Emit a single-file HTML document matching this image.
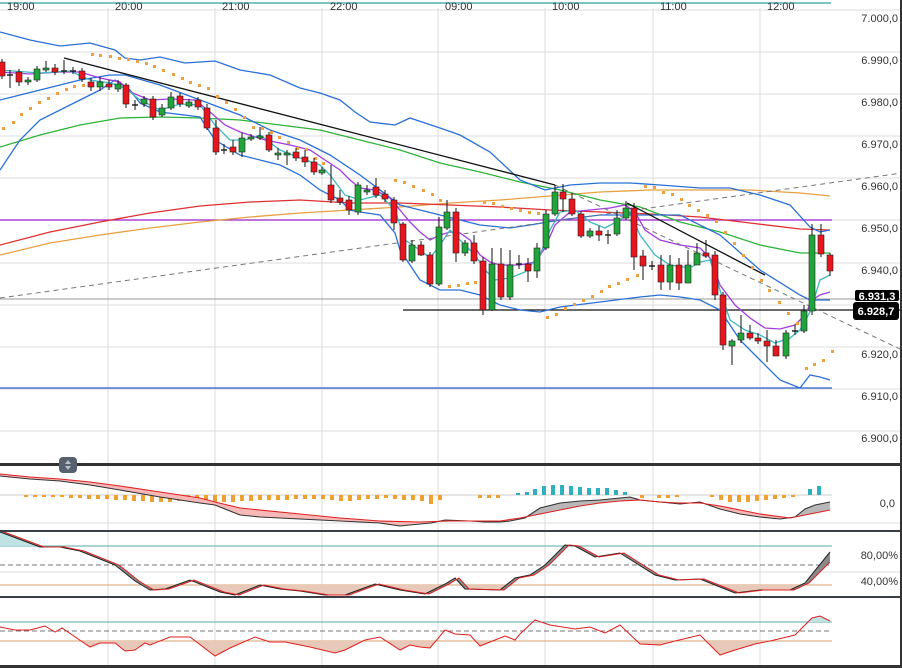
<!DOCTYPE html>
<html><head><meta charset="utf-8"><style>
html,body{margin:0;padding:0;background:#fff;}
svg{display:block;font-family:"Liberation Sans",sans-serif;}
</style></head><body>
<svg width="902" height="668" viewBox="0 0 902 668" xmlns="http://www.w3.org/2000/svg">
<rect width="902" height="668" fill="#fff"/>
<!-- grid -->
<g stroke="#dcdcdc" stroke-width="1">
<line x1="108" y1="8" x2="108" y2="666"/><line x1="215" y1="8" x2="215" y2="666"/><line x1="322" y1="8" x2="322" y2="666"/><line x1="438" y1="8" x2="438" y2="666"/><line x1="545" y1="8" x2="545" y2="666"/><line x1="653" y1="8" x2="653" y2="666"/><line x1="760" y1="8" x2="760" y2="666"/>
<line x1="0" y1="10" x2="900" y2="10"/><line x1="0" y1="52" x2="900" y2="52"/><line x1="0" y1="94" x2="900" y2="94"/><line x1="0" y1="136" x2="900" y2="136"/><line x1="0" y1="178" x2="900" y2="178"/><line x1="0" y1="220" x2="900" y2="220"/><line x1="0" y1="263" x2="900" y2="263"/><line x1="0" y1="305" x2="900" y2="305"/><line x1="0" y1="347" x2="900" y2="347"/><line x1="0" y1="389" x2="900" y2="389"/><line x1="0" y1="431" x2="900" y2="431"/>
<line x1="0" y1="523" x2="900" y2="523"/><line x1="0" y1="572" x2="900" y2="572"/>
</g>
<line x1="0" y1="3" x2="831" y2="3" stroke="#4fb3b3" stroke-width="1.5"/>
<g font-size="11" fill="#333">
<text x="7" y="10">19:00</text><text x="115" y="10">20:00</text><text x="222" y="10">21:00</text><text x="330" y="10">22:00</text><text x="445" y="10">09:00</text><text x="552" y="10">10:00</text><text x="660" y="10">11:00</text><text x="767" y="10">12:00</text>
<g text-anchor="end"><text x="898" y="22">7.000,0</text><text x="898" y="64">6.990,0</text><text x="898" y="106">6.980,0</text><text x="898" y="148">6.970,0</text><text x="898" y="190">6.960,0</text><text x="898" y="232">6.950,0</text><text x="898" y="274">6.940,0</text><text x="898" y="358">6.920,0</text><text x="898" y="400">6.910,0</text><text x="898" y="442">6.900,0</text>
<text x="895" y="507">0,0</text><text x="898" y="559">80,00%</text><text x="898" y="585">40,00%</text></g>
</g>
<!-- horizontal levels -->
<line x1="0" y1="220" x2="832" y2="220" stroke="#9b1fc9" stroke-width="1.2"/>
<line x1="0" y1="388" x2="832" y2="388" stroke="#2a62c9" stroke-width="1.2"/>
<line x1="0" y1="299" x2="900" y2="299" stroke="#999" stroke-width="1"/>
<line x1="403" y1="310" x2="900" y2="310" stroke="#111" stroke-width="1.2"/>
<!-- MAs -->
<g fill="none" stroke-width="1.3">
<polyline stroke="#e8a040" points="0,255 50,243 100,235 150,228 200,222 250,217 300,213 350,210 400,207 450,203 500,200 550,196 600,192 650,190 700,190 750,190 800,193 830,196"/>
<polyline stroke="#e03030" points="0,245 50,232 100,222 150,213 200,206 250,202 300,200 350,203 400,203 450,205 500,207 550,210 600,212 650,214 700,217 750,223 800,229 830,230"/>
<polyline stroke="#2eb43a" points="0,147 40,135 80,125 120,118 160,117 200,118 240,120 280,125 320,130 360,140 400,150 440,163 480,172 520,182 560,190 600,200 640,207 680,222 720,232 760,245 800,253 830,253"/>
<polyline stroke="#2a70d8" points="0,32 30,40 60,46 90,43 115,50 125,58 140,60 160,57 185,63 215,61 240,70 270,75 300,88 320,93 340,100 355,112 370,122 395,125 410,118 440,128 460,135 490,152 520,180 545,190 570,185 600,183 630,183 660,185 700,188 730,188 760,195 790,205 810,227 820,232 830,230"/>
<polyline stroke="#2a70d8" points="0,100 40,90 80,80 110,75 125,75 160,85 200,100 240,115 270,130 300,140 330,155 360,175 400,205 440,215 480,225 510,228 530,225 560,220 600,215 640,215 680,215 720,235 760,270 800,295 810,300 830,300"/>
<polyline stroke="#2a70d8" points="0,170 20,140 40,120 70,105 100,90 115,80 130,90 140,103 160,112 200,117 215,140 240,155 260,160 280,165 300,175 320,190 340,200 350,210 360,212 380,215 395,233 400,250 420,280 440,290 460,290 480,295 500,305 520,310 540,312 560,307 600,302 640,297 660,295 680,297 700,300 720,310 740,340 760,360 780,380 800,388 810,375 820,377 830,380"/>
<polyline stroke="#a33be0" points="0,72 30,74 60,72 80,72 100,78 120,82 130,92 150,100 170,99 195,100 210,112 225,125 240,132 265,140 290,145 310,150 325,160 340,170 350,180 360,188 375,190 390,198 400,210 410,222 420,232 430,240 440,235 450,232 460,233 470,240 480,255 490,262 500,265 520,265 535,262 545,248 555,225 570,212 590,210 610,208 625,205 635,212 645,230 660,240 680,245 700,248 710,258 720,285 735,305 750,318 765,328 780,329 795,325 805,315 812,300 820,295 830,292"/>
<polyline stroke="#3fb8c0" points="0,70 40,73 70,71 90,80 110,83 125,88 140,100 160,110 180,104 200,105 215,125 230,140 245,140 260,135 280,150 300,158 320,165 330,175 345,195 360,200 380,195 395,210 405,240 420,250 430,258 440,245 450,230 460,240 475,255 485,270 495,280 510,278 525,272 540,255 550,230 560,212 575,210 590,222 605,228 620,220 630,212 640,235 655,255 670,265 690,268 700,262 710,260 720,290 730,320 745,330 760,335 775,343 790,338 800,330 810,312 820,280 830,275"/>
</g>
<!-- trend lines -->
<g fill="none">
<line x1="64" y1="58" x2="555" y2="185" stroke="#111" stroke-width="1.3"/>
<line x1="627" y1="203" x2="765" y2="275" stroke="#111" stroke-width="1.3"/>
<line x1="0" y1="298" x2="902" y2="173" stroke="#777" stroke-dasharray="5,4"/>
<line x1="555" y1="185" x2="902" y2="350" stroke="#777" stroke-dasharray="5,4"/>
</g>
<!-- SAR -->
<g fill="#f0a040">
<rect x="2" y="127" width="3" height="3"/><rect x="12" y="121" width="3" height="3"/><rect x="20" y="113" width="3" height="3"/><rect x="29" y="107" width="3" height="3"/><rect x="38" y="101" width="3" height="3"/><rect x="47" y="97" width="3" height="3"/><rect x="56" y="92" width="3" height="3"/><rect x="65" y="88" width="3" height="3"/><rect x="73" y="85" width="3" height="3"/><rect x="82" y="84" width="3" height="3"/>
<rect x="91" y="53" width="3" height="3"/><rect x="99" y="54" width="3" height="3"/><rect x="109" y="55" width="3" height="3"/><rect x="118" y="57" width="3" height="3"/><rect x="127" y="58" width="3" height="3"/><rect x="136" y="60" width="3" height="3"/><rect x="145" y="62" width="3" height="3"/><rect x="153" y="65" width="3" height="3"/><rect x="162" y="69" width="3" height="3"/><rect x="172" y="73" width="3" height="3"/><rect x="181" y="77" width="3" height="3"/><rect x="189" y="81" width="3" height="3"/><rect x="198" y="84" width="3" height="3"/><rect x="207" y="87" width="3" height="3"/><rect x="216" y="95" width="3" height="3"/><rect x="225" y="101" width="3" height="3"/><rect x="234" y="108" width="3" height="3"/><rect x="243" y="116" width="3" height="3"/><rect x="252" y="126" width="3" height="3"/><rect x="261" y="127" width="3" height="3"/><rect x="270" y="131" width="3" height="3"/><rect x="278" y="136" width="3" height="3"/><rect x="287" y="141" width="3" height="3"/><rect x="296" y="147" width="3" height="3"/><rect x="305" y="148" width="3" height="3"/><rect x="314" y="157" width="3" height="3"/><rect x="322" y="162" width="3" height="3"/>
<rect x="394" y="179" width="3" height="3"/><rect x="403" y="181" width="3" height="3"/><rect x="412" y="185" width="3" height="3"/><rect x="422" y="189" width="3" height="3"/><rect x="431" y="193" width="3" height="3"/><rect x="439" y="199" width="3" height="3"/>
<rect x="448" y="285" width="3" height="3"/><rect x="457" y="284" width="3" height="3"/><rect x="466" y="282" width="3" height="3"/><rect x="474" y="281" width="3" height="3"/>
<rect x="483" y="201" width="3" height="3"/><rect x="492" y="202" width="3" height="3"/><rect x="501" y="205" width="3" height="3"/><rect x="510" y="207" width="3" height="3"/><rect x="519" y="209" width="3" height="3"/><rect x="528" y="211" width="3" height="3"/><rect x="537" y="212" width="3" height="3"/>
<rect x="546" y="316" width="3" height="3"/><rect x="555" y="313" width="3" height="3"/><rect x="564" y="307" width="3" height="3"/><rect x="573" y="303" width="3" height="3"/><rect x="582" y="299" width="3" height="3"/><rect x="591" y="295" width="3" height="3"/><rect x="600" y="290" width="3" height="3"/><rect x="608" y="285" width="3" height="3"/><rect x="617" y="282" width="3" height="3"/><rect x="626" y="278" width="3" height="3"/><rect x="636" y="274" width="3" height="3"/>
<rect x="644" y="185" width="3" height="3"/><rect x="653" y="186" width="3" height="3"/><rect x="662" y="191" width="3" height="3"/><rect x="671" y="193" width="3" height="3"/><rect x="680" y="198" width="3" height="3"/><rect x="688" y="204" width="3" height="3"/><rect x="697" y="209" width="3" height="3"/><rect x="706" y="214" width="3" height="3"/><rect x="715" y="220" width="3" height="3"/><rect x="724" y="231" width="3" height="3"/><rect x="733" y="242" width="3" height="3"/><rect x="742" y="254" width="3" height="3"/><rect x="751" y="266" width="3" height="3"/><rect x="760" y="279" width="3" height="3"/><rect x="768" y="289" width="3" height="3"/><rect x="778" y="301" width="3" height="3"/><rect x="787" y="312" width="3" height="3"/><rect x="796" y="322" width="3" height="3"/>
<rect x="805" y="367" width="3" height="3"/><rect x="813" y="363" width="3" height="3"/><rect x="822" y="359" width="3" height="3"/><rect x="831" y="350" width="3" height="3"/>
</g>
<!-- candles -->
<g stroke="#111" stroke-width="1">
<path d="M2 59V79M10 70V88M19 69V86M28 77V85M37 66V82M46 61V72M55 64V75M64 60V74M73 67V74M82 68V82M91 78V91M100 77V91M109 80V90M118 80V92M126 83V108M135 100V110M144 96V107M153 96V120M162 104V117M171 92V110M180 93V107M189 99V108M198 97V110M207 104V130M216 120V155M224 144V154M233 140V155M242 133V157M251 134V141M260 127V140M269 132V152M278 148V160M287 150V165M296 148V161M305 150V167M314 158V175M322 167V175M331 165V203M340 190V205M349 196V215M358 182V215M367 185V195M376 178V198M385 190V202M394 197V230M403 222V262M412 240V263M421 241V256M430 252V287M439 217V286M447 200V230M456 208V262M465 240V256M474 235V264M483 257V315M492 248V311M501 248V300M510 250V300M519 255V269M528 258V282M537 243V278M546 210V250M555 185V216M563 184V212M572 193V216M581 211V238M590 228V238M599 226V241M608 230V244M617 210V236M626 201V220M634 203V270M643 250V280M652 261V270M661 255V290M670 255V290M679 258V290M688 250V283M697 243V265M706 240V258M715 251V300M723 292V350M732 339V365M741 315V343M750 325V340M758 333V344M767 330V362M776 340V355M786 330V359M795 325V335M804 305V333M812 224V315M821 224V257M830 253V276"/>
</g>
<g fill="#e8151c" stroke="#222" stroke-width="0.6">
<rect x="-1" y="62" width="6" height="14"/><rect x="16" y="72" width="6" height="10"/><rect x="52" y="68" width="6" height="4"/><rect x="79" y="71" width="6" height="8"/><rect x="88" y="82" width="6" height="5"/><rect x="106" y="84" width="6" height="3"/><rect x="123" y="85" width="6" height="19"/><rect x="150" y="99" width="6" height="18"/><rect x="177" y="96" width="6" height="8"/><rect x="195" y="100" width="6" height="7"/><rect x="204" y="108" width="6" height="20"/><rect x="213" y="128" width="6" height="24"/><rect x="230" y="147" width="6" height="5"/><rect x="266" y="135" width="6" height="15"/><rect x="293" y="152" width="6" height="6"/><rect x="302" y="157" width="6" height="5"/><rect x="311" y="162" width="6" height="10"/><rect x="328" y="185" width="6" height="15"/><rect x="337" y="198" width="6" height="4"/><rect x="346" y="200" width="6" height="10"/><rect x="373" y="187" width="6" height="8"/><rect x="382" y="194" width="6" height="5"/><rect x="391" y="200" width="6" height="23"/><rect x="400" y="224" width="6" height="36"/><rect x="418" y="245" width="6" height="10"/><rect x="427" y="255" width="6" height="29"/><rect x="453" y="212" width="6" height="41"/><rect x="471" y="243" width="6" height="18"/><rect x="480" y="261" width="6" height="49"/><rect x="498" y="264" width="6" height="33"/><rect x="525" y="264" width="6" height="7"/><rect x="560" y="192" width="6" height="7"/><rect x="569" y="199" width="6" height="15"/><rect x="578" y="214" width="6" height="22"/><rect x="596" y="231" width="6" height="4"/><rect x="631" y="208" width="6" height="49"/><rect x="640" y="256" width="6" height="10"/><rect x="658" y="265" width="6" height="17"/><rect x="676" y="265" width="6" height="18"/><rect x="703" y="253" width="6" height="3"/><rect x="712" y="255" width="6" height="40"/><rect x="720" y="295" width="6" height="50"/><rect x="747" y="333" width="6" height="5"/><rect x="755" y="338" width="6" height="3"/><rect x="764" y="341" width="6" height="5"/><rect x="773" y="346" width="6" height="10"/><rect x="818" y="235" width="6" height="19"/><rect x="827" y="255" width="6" height="16"/>
</g>
<g fill="#1fa53a" stroke="#222" stroke-width="0.6">
<rect x="25" y="80" width="6" height="2"/><rect x="34" y="69" width="6" height="11"/><rect x="43" y="68" width="6" height="2"/><rect x="97" y="82" width="6" height="5"/><rect x="115" y="84" width="6" height="5"/><rect x="141" y="99" width="6" height="5"/><rect x="159" y="108" width="6" height="7"/><rect x="168" y="97" width="6" height="11"/><rect x="186" y="102" width="6" height="4"/><rect x="239" y="138" width="6" height="14"/><rect x="248" y="137" width="6" height="2"/><rect x="257" y="136" width="6" height="2"/><rect x="275" y="153" width="6" height="2"/><rect x="284" y="153" width="6" height="2"/><rect x="319" y="170" width="6" height="3"/><rect x="355" y="185" width="6" height="27"/><rect x="364" y="190" width="6" height="2"/><rect x="409" y="245" width="6" height="16"/><rect x="436" y="227" width="6" height="57"/><rect x="444" y="212" width="6" height="16"/><rect x="462" y="243" width="6" height="10"/><rect x="489" y="264" width="6" height="46"/><rect x="507" y="265" width="6" height="32"/><rect x="534" y="248" width="6" height="23"/><rect x="543" y="214" width="6" height="34"/><rect x="552" y="192" width="6" height="22"/><rect x="587" y="231" width="6" height="5"/><rect x="614" y="218" width="6" height="16"/><rect x="623" y="208" width="6" height="10"/><rect x="667" y="265" width="6" height="17"/><rect x="685" y="265" width="6" height="18"/><rect x="694" y="253" width="6" height="12"/><rect x="729" y="341" width="6" height="5"/><rect x="738" y="333" width="6" height="7"/><rect x="783" y="333" width="6" height="23"/><rect x="801" y="311" width="6" height="20"/><rect x="809" y="235" width="6" height="76"/>
</g>
<g stroke="#222" stroke-width="1.5"><path d="M7 75h6M61 71h6M70 71h6M132 105h6M221 150h6M516 264h6M605 235h6M649 266h6M792 331h6"/></g>
<!-- price tags -->
<rect x="855" y="290" width="44" height="11" rx="2" fill="#000"/>
<text x="877" y="300" font-size="11" font-weight="bold" fill="#fff" text-anchor="middle">6.931,3</text>
<rect x="853" y="302" width="46" height="18" rx="3" fill="#000"/>
<text x="876" y="315" font-size="11" font-weight="bold" fill="#fff" text-anchor="middle">6.928,7</text>
<!-- MACD panel -->
<line x1="0" y1="495" x2="832" y2="495" stroke="#ccc"/>
<g fill="#f0a030">
<path d="M24 495h4v2h-4zM33 495h4v2h-4zM42 495h4v2h-4zM51 495h4v2h-4zM60 495h4v2h-4zM69 495h4v3h-4zM78 495h4v3h-4zM87 495h4v4h-4zM96 495h4v4h-4zM105 495h4v4h-4zM114 495h4v5h-4zM123 495h4v5h-4zM132 495h4v6h-4zM141 495h4v6h-4zM150 495h4v7h-4zM159 495h4v7h-4zM168 495h4v7h-4zM177 495h4v6h-4zM186 495h4v6h-4zM195 495h4v6h-4zM204 495h4v8h-4zM213 495h4v7h-4zM222 495h4v7h-4zM231 495h4v7h-4zM240 495h4v6h-4zM249 495h4v6h-4zM258 495h4v5h-4zM267 495h4v5h-4zM276 495h4v5h-4zM285 495h4v5h-4zM294 495h4v4h-4zM303 495h4v4h-4zM312 495h4v4h-4zM321 495h4v4h-4zM330 495h4v5h-4zM339 495h4v6h-4zM348 495h4v6h-4zM357 495h4v5h-4zM366 495h4v4h-4zM375 495h4v4h-4zM384 495h4v3h-4zM393 495h4v4h-4zM402 495h4v5h-4zM411 495h4v5h-4zM420 495h4v6h-4zM429 495h4v9h-4zM438 495h4v5h-4zM478 495h4v3h-4zM487 495h4v3h-4zM496 495h4v3h-4zM640 495h4v3h-4zM657 495h4v3h-4zM666 495h4v3h-4zM675 495h4v2h-4zM710 495h4v2h-4zM719 495h4v5h-4zM728 495h4v7h-4zM737 495h4v7h-4zM746 495h4v7h-4zM755 495h4v6h-4zM764 495h4v5h-4zM773 495h4v4h-4zM782 495h4v3h-4zM791 495h4v2h-4z"/>
</g>
<g fill="#2eb0c0">
<path d="M516 493h4v2h-4zM525 492h4v3h-4zM533 489h4v6h-4zM542 486h4v9h-4zM551 485h4v10h-4zM560 485h4v10h-4zM569 486h4v9h-4zM578 487h4v8h-4zM587 488h4v7h-4zM596 488h4v7h-4zM605 488h4v7h-4zM614 490h4v5h-4zM623 492h4v3h-4zM808 489h4v6h-4zM817 486h4v9h-4z"/>
</g>
<polygon fill="#f7b8b8" stroke="none" points="0,476 30,479 60,481 90,485 120,490 160,497 200,503 215,505 240,515 260,517 300,519 340,521 360,522 380,523 400,526 420,524 431,523 445,520 470,521 485,522 500,522 510,521 525,518 540,508 560,503 580,501 600,500 620,498 630,497 640,500 660,502 680,504 700,502 720,509 740,514 760,517 780,519 795,517 805,509 815,505 830,502 830,510 810,514 790,518 760,514 740,510 720,506 700,503 680,503 660,502 640,500 620,501 600,503 580,506 560,510 540,514 520,518 500,521 480,521 450,521 420,522 380,521 340,518 300,514 240,508 215,502 200,498 160,492 120,486 90,482 60,479 30,477 0,474"/>
<polygon fill="#b8b8b8" points="525,518 540,508 560,503 580,501 600,500 620,498 630,497 640,500 620,501 600,503 580,506 560,510 540,514 520,518"/>
<polygon fill="#b8b8b8" points="795,517 805,509 815,505 830,502 830,510 810,514"/>
<polyline fill="none" stroke="#333" stroke-width="1.1" points="0,476 30,479 60,481 90,485 120,490 160,497 200,503 215,505 240,515 260,517 300,519 340,521 360,522 380,523 400,526 420,524 431,523 445,520 470,521 485,522 500,522 510,521 525,518 540,508 560,503 580,501 600,500 620,498 630,497 640,500 660,502 680,504 700,502 720,509 740,514 760,517 780,519 795,517 805,509 815,505 830,502"/>
<polyline fill="none" stroke="#e02020" stroke-width="1.1" points="0,474 30,477 60,479 90,482 120,486 160,492 200,498 215,502 240,508 300,514 340,518 380,521 420,522 450,521 480,521 500,521 520,518 540,514 560,510 580,506 600,503 620,501 640,500 660,502 680,503 700,503 720,506 740,510 760,514 790,518 810,514 830,510"/>
<!-- Stoch panel -->
<line x1="0" y1="546" x2="832" y2="546" stroke="#5aa8a8"/>
<line x1="0" y1="565" x2="832" y2="565" stroke="#777" stroke-dasharray="5,3"/>
<line x1="0" y1="585" x2="832" y2="585" stroke="#d8a070"/>
<clipPath id="cb"><rect x="0" y="585" width="832" height="12"/></clipPath>
<clipPath id="ct"><rect x="0" y="530" width="832" height="16"/></clipPath>
<polygon clip-path="url(#cb)" fill="#e8c8b8" points="0,585 115,565 135,581 150,590 165,589 190,580 220,592 235,595 260,585 280,589 300,591 325,595 345,595 375,584 400,590 425,594 445,584 455,578 465,589 500,590 515,578 530,575 545,565 565,545 700,579 735,593 760,590 790,590 805,583 830,552 830,585"/>
<polygon clip-path="url(#ct)" fill="#bfe3e3" points="0,532 40,547 0,547"/>
<polygon fill="#8a8a8a" points="0,532 40,547 60,547 80,551 115,565 135,581 150,590 165,589 190,580 220,592 235,595 260,585 280,589 300,591 325,595 345,595 375,584 400,590 425,594 445,584 455,578 465,589 500,590 515,578 530,575 545,565 565,545 575,546 595,557 620,553 655,575 675,580 700,579 735,593 760,590 790,590 805,583 830,552 830,562 809,583 794,590 764,590 739,593 704,579 679,580 659,575 624,553 599,557 579,546 569,545 549,565 534,575 519,578 504,590 469,589 459,578 449,584 429,594 404,590 379,584 349,595 329,595 304,591 284,589 264,585 239,595 224,592 194,580 169,589 154,590 139,581 119,565 84,551 64,547 44,547 4,532"/>
<polyline fill="none" stroke="#222" stroke-width="1" points="0,532 40,547 60,547 80,551 115,565 135,581 150,590 165,589 190,580 220,592 235,595 260,585 280,589 300,591 325,595 345,595 375,584 400,590 425,594 445,584 455,578 465,589 500,590 515,578 530,575 545,565 565,545 575,546 595,557 620,553 655,575 675,580 700,579 735,593 760,590 790,590 805,583 830,552"/>
<polyline fill="none" stroke="#e02020" stroke-width="1" points="4,532 44,547 64,547 84,551 119,565 139,581 154,590 169,589 194,580 224,592 239,595 264,585 284,589 304,591 329,595 349,595 379,584 404,590 429,594 449,584 459,578 469,589 504,590 519,578 534,575 549,565 569,545 579,546 599,557 624,553 659,575 679,580 704,579 739,593 764,590 794,590 809,583 830,562"/>
<!-- RSI panel -->
<line x1="0" y1="622" x2="832" y2="622" stroke="#5aa8a8"/>
<line x1="0" y1="631" x2="832" y2="631" stroke="#777" stroke-dasharray="5,3"/>
<line x1="0" y1="641" x2="832" y2="641" stroke="#d8a070"/>
<clipPath id="rb"><rect x="0" y="641" width="832" height="25"/></clipPath>
<clipPath id="rt"><rect x="0" y="600" width="832" height="22"/></clipPath>
<g>
<polygon id="rsi" clip-path="url(#rb)" fill="#e8c8b8" points="0,641 0,627 15,630 30,630 45,626 55,632 62,628 90,647 100,643 115,643 125,651 135,650 145,643 150,645 170,637 190,637 215,656 230,648 255,637 270,642 285,642 310,647 335,653 345,650 365,640 380,637 400,650 410,645 420,647 430,648 445,630 455,634 470,635 480,646 490,642 505,636 515,640 520,634 535,620 550,625 575,629 590,627 605,633 620,625 640,644 660,645 675,641 700,635 720,655 735,650 755,644 770,641 795,635 812,618 820,616 830,621 830,641"/>
<polygon clip-path="url(#rt)" fill="#bfe3e3" points="0,622 520,634 535,620 550,625 575,629 795,635 812,618 820,616 830,621 830,622"/>
</g>
<polyline fill="none" stroke="#e02020" stroke-width="1" points="0,627 15,630 30,630 45,626 55,632 62,628 90,647 100,643 115,643 125,651 135,650 145,643 150,645 170,637 190,637 215,656 230,648 255,637 270,642 285,642 310,647 335,653 345,650 365,640 380,637 400,650 410,645 420,647 430,648 445,630 455,634 470,635 480,646 490,642 505,636 515,640 520,634 535,620 550,625 575,629 590,627 605,633 620,625 640,644 660,645 675,641 700,635 720,655 735,650 755,644 770,641 795,635 812,618 820,616 830,621"/>
<!-- separators -->
<rect x="0" y="463" width="902" height="3" fill="#333"/>
<rect x="0" y="530" width="902" height="2" fill="#3a3f45"/>
<rect x="0" y="596" width="902" height="2" fill="#3a3f45"/>
<rect x="0" y="665" width="902" height="3" fill="#333"/>
<rect x="900" y="0" width="2" height="668" fill="#333"/>
<rect x="59" y="457" width="18" height="16" rx="4" fill="#56606e"/>
<path d="M68 460l-3 4h6zM68 470l-3-4h6z" fill="#b8c0cc"/>
</svg>
</body></html>
